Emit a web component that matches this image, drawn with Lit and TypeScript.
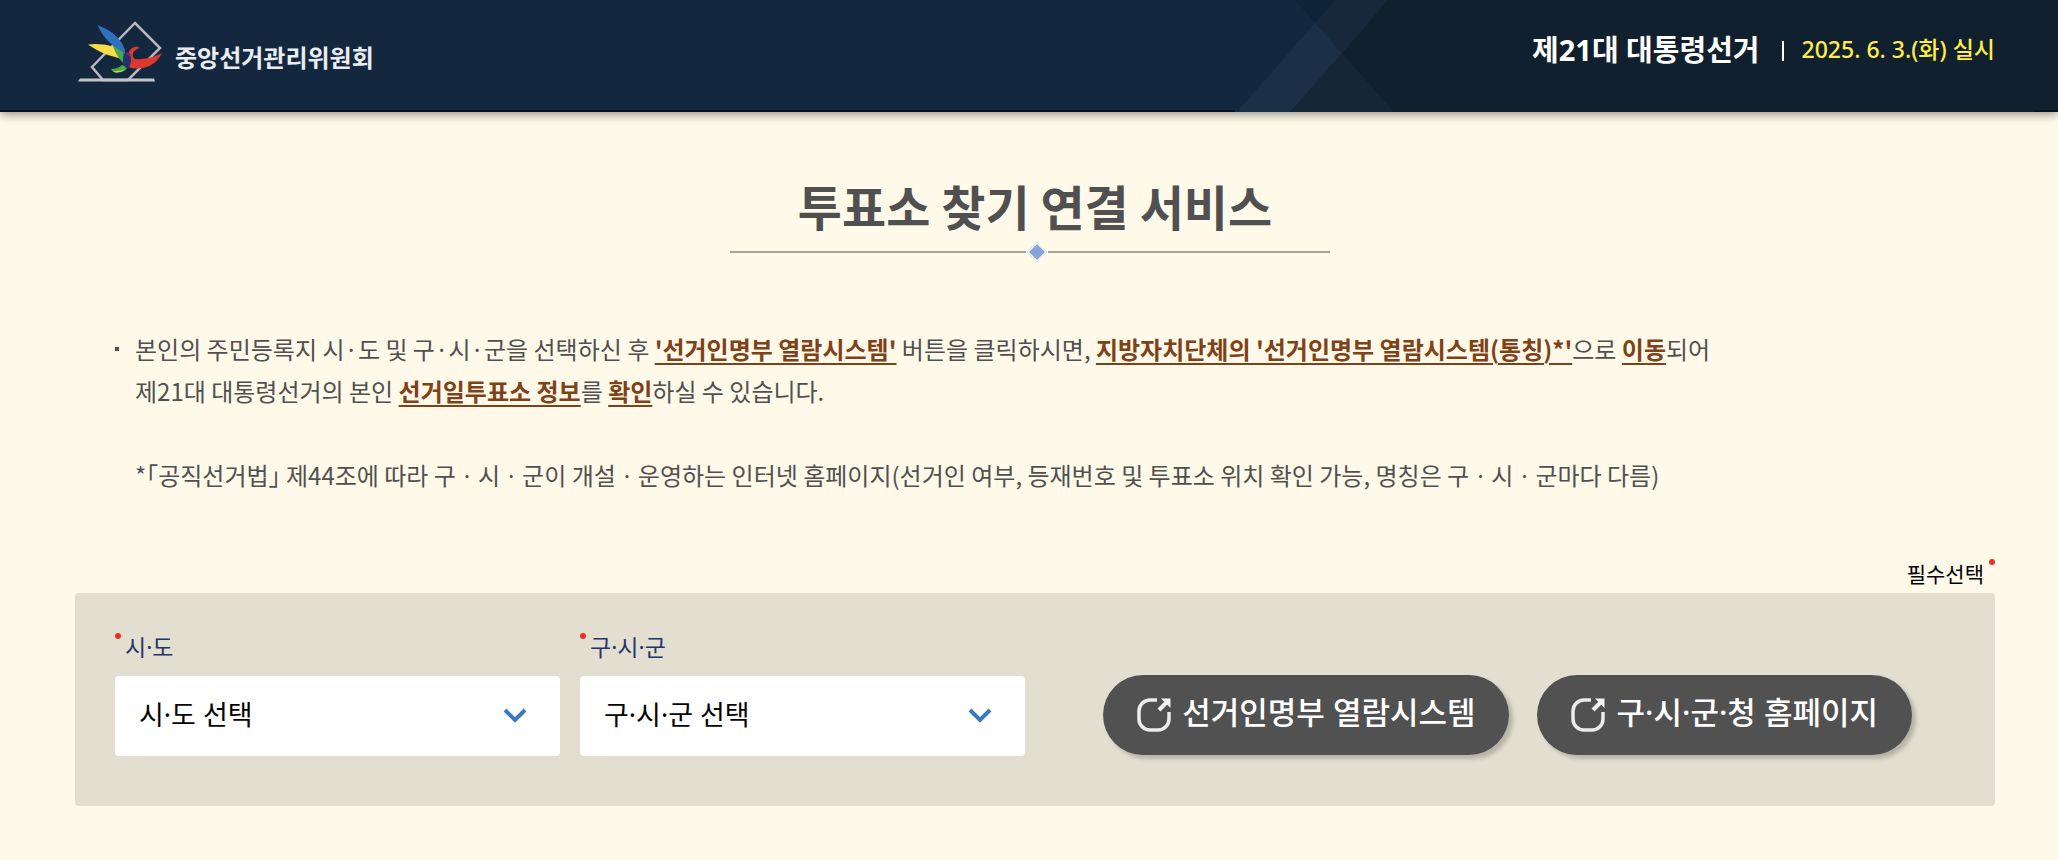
import { LitElement, html, css, svg } from "lit";
import { customElement, property } from "lit/decorators.js";

const base = css`
  *, *::before, *::after { box-sizing: border-box; }
`;

@customElement("site-header")
class SiteHeader extends LitElement {
  static styles = [base, css`
    :host { display: block; }
    .bar {
      position: relative;
      display: flex;
      justify-content: space-between;
      height: 112px;
      padding: 0 63px 0 75px;
      background: #13283e;
      border-bottom: 2px solid #06121c;
      box-shadow: 0 2px 10px rgba(0, 0, 0, 0.45);
    }
    .deco { position: absolute; top: 0; right: 0; width: 823px; height: 112px; }
    .brand {
      position: relative;
      display: flex;
      align-items: center;
      gap: 10px;
      padding-top: 2px;
      color: #e9edf1;
      text-decoration: none;
      font-size: 24px;
      font-weight: 700;
    }
    .logo { display: block; width: 90px; height: 82px; }
    .election {
      position: relative;
      display: flex;
      align-items: center;
      height: 96px;
      color: #fff;
      font-family: "Noto Sans", "Noto Sans CJK KR", sans-serif;
    }
    .name { font-size: 29px; font-weight: 700; }
    .date {
      display: flex;
      align-items: center;
      color: #ffee4a;
      font-size: 23px;
      font-weight: 500;
    }
    .date::before { content: ""; width: 2px; height: 20px; margin: 6px 18px 0 22px; background: #fff; }
  `];

  render() {
    return html`
      <header class="bar">
        <svg class="deco" viewBox="0 0 823 112" aria-hidden="true">
          <path fill="#11202f" d="M153 0H823V112H159L107 53Z" />
          <path fill="#0f2338" d="M60 0H101L80 23Z" />
          <path fill="#17283a" d="M101 0H153L107 53L80 23Z" />
          <path fill="#152636" d="M107 53L159 112H55Z" />
          <path fill="#1b3046" d="M80 23L107 53L55 112H2Z" />
          <path fill="#13283e" d="M0 110H4L2 112H0Z" />
          <path fill="#06121c" d="M800 110H823V112H800Z" />
        </svg>
        <a class="brand" href="#">
          <svg class="logo" viewBox="0 0 90 82" aria-hidden="true">
            <path d="M60 8L85 33L53 65H28L17 52Z" fill="none" stroke="#b6b8bd" stroke-width="2.5" />
            <path d="M3 66.500L5 63.500H79L80 66.500Z" fill="#c4c5c9" />
            <path d="M22.500 10Q40 17 46 27Q51 34 50 40Q40 33 33 26Q27 20 22.500 10Z" fill="#2f70bf" />
            <path d="M13 29.500Q28 28 40 32L50 46Q42 42 33 40Q24 37 13 29.500Z" fill="#f7dc45" />
            <path d="M38 31L48 37L51 50Q42 44 38 31Z" fill="#4aa64b" />
            <path d="M36 54Q43 54 47 50L53 51Q51 57 43 57.500Q38 58 36 54Z" fill="#4aa64b" />
            <path d="M38 56Q44 57 50 54Q46 58 40 57.500Z" fill="#d8d94a" />
            <path d="M53 40Q54 32 62 31.500L65 33Q60 34 58 38Q57 42 60 44Q74 45 87 38Q79 53 64 53.500Q58 54 54 52Z" fill="#dd3830" />
            <ellipse cx="52" cy="45" rx="4" ry="8" fill="#25306f" />
            <path d="M50 38Q55 37 56 45Q55 40 50 38Z" fill="#8d2f8c" />
          </svg>
          <span>중앙선거관리위원회</span>
        </a>
        <div class="election">
          <span class="name">제21대 대통령선거</span>
          <span class="date">2025. 6. 3.(화) 실시</span>
        </div>
      </header>
    `;
  }
}

@customElement("select-field")
class SelectField extends LitElement {
  @property() label = "";

  static styles = [base, css`
    :host {
      display: block;
      flex: 0 1 445px;
      min-width: 0;
      font-family: "Noto Sans", "Noto Sans CJK KR", sans-serif;
    }
    .label {
      display: flex;
      align-items: flex-start;
      gap: 4px;
      height: 43px;
      color: #24356a;
      font-size: 23px;
      line-height: 28px;
    }
    .label::before { content: ""; width: 6px; height: 6px; border-radius: 50%; background: #f03022; }
    .box { display: grid; align-items: center; }
    .select, .arrow { grid-area: 1 / 1; }
    .select {
      width: 100%;
      height: 80px;
      padding: 0 80px 4px 24px;
      border: 0;
      border-radius: 4px;
      appearance: none;
      background: #fff;
      color: #000;
      font: inherit;
      font-size: 27px;
    }
    .arrow { justify-self: end; width: 26px; height: 20px; margin-right: 32px; pointer-events: none; }
  `];

  render() {
    return html`
      <label class="label" for="choice">${this.label}</label>
      <div class="box">
        <select class="select" id="choice" required>
          <option>${this.label} 선택</option>
        </select>
        <svg class="arrow" viewBox="0 0 26 20" aria-hidden="true">
          <path d="M3 4L13 14L23 4" fill="none" stroke="#3b79bd" stroke-width="4" />
        </svg>
      </div>
    `;
  }
}

const linkIcon = svg`
  <path d="M20 2H13A11 11 0 0 0 2 13V21A11 11 0 0 0 13 32H21A11 11 0 0 0 32 21V14" fill="none" stroke="#ececec" stroke-width="3.5" />
  <path d="M22 12L30 4" stroke="#f2f2f2" stroke-width="4" />
  <path d="M24 0.500H33.500V10Z" fill="#f2f2f2" />
`;

@customElement("app-root")
class AppRoot extends LitElement {
  static styles = [base, css`
    :host {
      display: block;
      min-height: 100vh;
      background: #fff9e9;
      color: #505050;
      font-family: "Noto Sans CJK KR", "Noto Sans", sans-serif;
    }
    .page { padding: 61px 63px 53px 75px; }
    .title {
      display: flex;
      flex-direction: column;
      align-items: center;
      margin: 0;
      font-size: 48px;
      font-weight: 700;
      line-height: 64px;
    }
    .rule {
      display: grid;
      grid-template-columns: 296px 22px 282px;
      align-items: center;
      height: 24px;
      margin: 3px 10px 0 0;
    }
    .rule::before, .rule::after { content: ""; height: 2px; background: #a5a39c; }
    .diamond { width: 22px; height: 22px; }
    .guide { padding: 64px 60px 0; font-size: 24px; line-height: 42px; }
    .list { margin: 0; padding: 0; list-style: none; }
    .item { display: flex; }
    .item::before { content: ""; flex: none; width: 4px; height: 4px; margin: 19px 16px 0 -20px; background: #505050; }
    .note { margin: 42px 0 0; }
    .strong { color: #7f4218; font-weight: 700; text-decoration: underline; text-decoration-thickness: 2px; text-underline-offset: 4px; }
    .required {
      display: flex;
      justify-content: flex-end;
      gap: 5px;
      margin: 63px 0 6px;
      color: #000;
      font-size: 21px;
      line-height: 28px;
    }
    .required::after { content: ""; width: 6px; height: 6px; border-radius: 50%; background: #f03022; }
    .panel {
      display: flex;
      align-items: flex-end;
      justify-content: space-between;
      gap: 40px;
      padding: 40px 83px 50px 40px;
      border-radius: 4px;
      background: #e3dfd0;
    }
    .fields { display: flex; flex: 0 1 910px; gap: 20px; }
    .actions { display: flex; flex: none; gap: 28px; padding-bottom: 1px; }
    .go {
      display: flex;
      align-items: center;
      gap: 11px;
      height: 80px;
      padding: 0 34px;
      border: 0;
      border-radius: 40px;
      background: #515151;
      box-shadow: 4px 4px 4px rgba(0, 0, 0, 0.2);
      color: #fff;
      font-family: "Noto Sans", "Noto Sans CJK KR", sans-serif;
      font-size: 31px;
      font-weight: 500;
    }
    .icon { width: 34px; height: 34px; }
    .text { padding-bottom: 9px; }
  `];

  render() {
    return html`
      <site-header></site-header>
      <main class="page">
        <h1 class="title">
          투표소 찾기 연결 서비스
          <span class="rule">
            <svg class="diamond" viewBox="0 0 22 22" aria-hidden="true">
              <path d="M11 1L21 11L11 21L1 11Z" fill="#fff" stroke="#dfe6f0" stroke-width="1" />
              <path d="M11 3L19 11L11 19L3 11Z" fill="#86a5d6" />
            </svg>
          </span>
        </h1>
        <section class="guide">
          <ul class="list">
            <li class="item"><div>본인의 주민등록지 시·도 및 구·시·군을 선택하신 후 <span class="strong">'선거인명부 열람시스템'</span> 버튼을 클릭하시면, <span class="strong">지방자치단체의 '선거인명부 열람시스템(통칭)*'</span>으로 <span class="strong">이동</span>되어<br />제21대 대통령선거의 본인 <span class="strong">선거일투표소 정보</span>를 <span class="strong">확인</span>하실 수 있습니다.</div></li>
          </ul>
          <p class="note">*｢공직선거법｣ 제44조에 따라 구ㆍ시ㆍ군이 개설ㆍ운영하는 인터넷 홈페이지(선거인 여부, 등재번호 및 투표소 위치 확인 가능, 명칭은 구ㆍ시ㆍ군마다 다름)</p>
        </section>
        <p class="required">필수선택</p>
        <form class="panel">
          <div class="fields">
            <select-field label="시·도"></select-field>
            <select-field label="구·시·군"></select-field>
          </div>
          <div class="actions">
            <button class="go" type="button"><svg class="icon" viewBox="0 0 34 34" aria-hidden="true">${linkIcon}</svg><span class="text">선거인명부 열람시스템</span></button>
            <button class="go" type="button"><svg class="icon" viewBox="0 0 34 34" aria-hidden="true">${linkIcon}</svg><span class="text">구·시·군·청 홈페이지</span></button>
          </div>
        </form>
      </main>
    `;
  }
}
